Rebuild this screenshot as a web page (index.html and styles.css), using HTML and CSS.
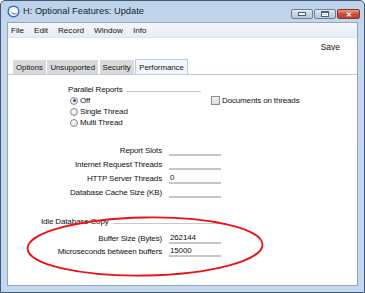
FILE: index.html
```html
<!DOCTYPE html>
<html>
<head>
<meta charset="utf-8">
<link rel="stylesheet" href="styles.css">
</head>
<body>
<div class="window">
  <div class="titlebar">
    <svg class="appicon" width="13" height="13" viewBox="0 0 13 13">
      <circle cx="6.5" cy="6.5" r="6" fill="#2f6fb5"/>
      <circle cx="6.5" cy="6.5" r="4.6" fill="#ffffff"/>
      <path d="M3.2 4.5 C4.5 8.5 8 9.5 10.5 7.5 C9 10.5 4.5 10.5 3.2 4.5 Z" fill="#2f6fb5"/>
    </svg>
    <span class="title">H: Optional Features: Update</span>
    <div class="controls">
      <div class="cbtn min"><span class="glyph-min"></span></div>
      <div class="cbtn max"><span class="glyph-max"></span></div>
      <div class="cbtn close"><span class="glyph-x">✕</span></div>
    </div>
  </div>
  <div class="client">
    <div class="menubar">
      <span>File</span><span>Edit</span><span>Record</span><span>Window</span><span>Info</span>
    </div>
    <div class="toolbar"><span class="save">Save</span></div>
    <div class="tabs">
      <span class="tab">Options</span>
      <span class="tab">Unsupported</span>
      <span class="tab">Security</span>
      <span class="tab active">Performance</span>
    </div>
    <div class="panel">
      <div class="top">
        <div class="group">
          <div class="grouphead"><span>Parallel Reports</span><i class="rule"></i></div>
          <label class="radio"><span class="rb on"></span>Off</label>
          <label class="radio"><span class="rb"></span>Single Thread</label>
          <label class="radio"><span class="rb"></span>Multi Thread</label>
        </div>
        <label class="check"><span class="cb"></span>Documents on threads</label>
      </div>
      <div class="form">
        <span class="lbl">Report Slots</span><span class="fld"></span>
        <span class="lbl">Internet Request Threads</span><span class="fld"></span>
        <span class="lbl">HTTP Server Threads</span><span class="fld">0</span>
        <span class="lbl">Database Cache Size (KB)</span><span class="fld"></span>
      </div>
      <div class="idlehead"><span>Idle Database Copy</span><i class="rule"></i></div>
      <div class="form form2">
        <span class="lbl">Buffer Size (Bytes)</span><span class="fld">262144</span>
        <span class="lbl">Microseconds between buffers</span><span class="fld">15000</span>
      </div>
    </div>
  </div>
  <svg class="ellipse" width="365" height="293" viewBox="0 0 365 293">
    <ellipse cx="145" cy="246.5" rx="117.5" ry="29" fill="none" stroke="#ee1111" stroke-width="1.8" transform="rotate(-1 145 246.5)"/>
  </svg>
</div>
</body>
</html>
```
FILE: styles.css
```css
html, body {
  margin: 0;
  padding: 0;
  width: 365px;
  height: 293px;
  overflow: hidden;
  background: #ffffff;
  font-family: "Liberation Sans", Arial, sans-serif;
  color: #111111;
}
.window {
  position: relative;
  width: 365px;
  height: 293px;
  box-sizing: border-box;
  border: 1px solid #3d5a78;
  border-radius: 5px 5px 0 0;
  background: linear-gradient(#bcd0e8, #c7d8ee 30px, #c6d8ee);
  padding: 0 6px 6px 6px;
  display: flex;
  flex-direction: column;
}
.titlebar {
  height: 20px;
  display: flex;
  align-items: center;
  position: relative;
}
.title {
  font-size: 9.3px;
  margin-left: 3px;
  color: #0f1f33;
}
.controls {
  position: absolute;
  right: -2px;
  top: 8px;
  display: flex;
  gap: 1px;
}
.cbtn {
  height: 10px;
  border: 1px solid #6a7f98;
  border-radius: 2px;
  box-sizing: border-box;
  display: flex;
  align-items: center;
  justify-content: center;
}
.min, .max {
  width: 22px;
  background: linear-gradient(#e4ecf6, #c4d4e8 50%, #b5c8e0);
}
.close {
  width: 23px;
  background: linear-gradient(#e8a08e, #cc4f38 50%, #c0402c);
  border-color: #7a3a30;
}
.glyph-min { width: 6px; height: 2px; background: #fff; border: 1px solid #4a5e78; }
.glyph-max { width: 6px; height: 3px; background: transparent; border: 1px solid #4a5e78; border-top-width: 2px; box-shadow: 0 0 0 1px #fff inset; }
.glyph-x { color: #fff; font-size: 7px; line-height: 7px; font-weight: bold; }
.client {
  flex: 1;
  background: #ffffff;
  border: 1px solid #8ea5c2;
  display: flex;
  flex-direction: column;
  margin-top: 1px;
}
.menubar {
  height: 14px;
  display: flex;
  align-items: center;
  font-size: 8.1px;
  background: linear-gradient(#f5f8fc, #e6edf7);
  border-bottom: 1px solid #dde5f0;
  padding-left: 3px;
}
.menubar span { margin-right: 10px; }
.toolbar {
  height: 21px;
  display: flex;
  align-items: center;
  justify-content: flex-end;
  padding-right: 17px;
  padding-bottom: 4px;
  box-sizing: border-box;
  font-size: 8.5px;
}
.tabs {
  height: 15px;
  display: flex;
  gap: 1.5px;
  padding-left: 5px;
  border-bottom: 1px solid #b9cde6;
  align-items: flex-end;
}
.tab {
  height: 14px;
  display: flex;
  align-items: center;
  padding: 0 3px;
  background: #d9d9d9;
  font-size: 7.8px;
  box-sizing: border-box;
}
.tab.active {
  height: 15px;
  background: #f3f7fc;
  border: 1px solid #b9cde6;
  border-bottom: none;
  padding: 0 3px;
}
.panel {
  flex: 1;
  font-size: 8px;
  letter-spacing: -0.15px;
  position: relative;
  padding-top: 9px;
}
.top {
  display: flex;
}
.group {
  margin-left: 60px;
  width: 133px;
  display: flex;
  flex-direction: column;
}
.grouphead {
  display: flex;
  align-items: center;
  height: 11px;
}
.rule {
  flex: 1;
  height: 1px;
  background: #c8c8c8;
  margin-left: 4px;
  margin-top: 3px;
}
.radio {
  display: flex;
  align-items: center;
  height: 11px;
  margin-left: 2px;
}
.rb {
  width: 8px;
  height: 8px;
  border-radius: 50%;
  border: 1px solid #8c8c8c;
  background: radial-gradient(circle at 40% 40%, #ffffff, #d6d6d6);
  margin-right: 2px;
  position: relative;
  box-sizing: border-box;
}
.rb.on::after {
  content: "";
  position: absolute;
  left: 1.5px;
  top: 1.5px;
  width: 3px;
  height: 3px;
  border-radius: 50%;
  background: #1f5fa8;
}
.check {
  display: flex;
  align-items: center;
  margin-left: 10px;
  margin-top: 11px;
  height: 11px;
}
.cb {
  width: 9px;
  height: 9px;
  border: 1px solid #8c8c8c;
  background: linear-gradient(#f2f2f2, #dcdcdc);
  box-sizing: border-box;
  margin-right: 2px;
}
.form {
  display: grid;
  grid-template-columns: 154px 52px;
  column-gap: 7px;
  row-gap: 3px;
  margin-top: 17px;
}
.lbl {
  text-align: right;
  height: 11px;
  line-height: 11px;
}
.fld {
  height: 9px;
  line-height: 10px;
  border-bottom: 2px solid #c6c6c6;
  padding-left: 1px;
}
.idlehead {
  display: flex;
  align-items: center;
  margin-top: 18px;
  margin-left: 33px;
  width: 186px;
  height: 11px;
}
.form2 {
  margin-top: 6px;
  row-gap: 2px;
}
.ellipse {
  position: absolute;
  left: -1px;
  top: -1px;
  pointer-events: none;
}
```
